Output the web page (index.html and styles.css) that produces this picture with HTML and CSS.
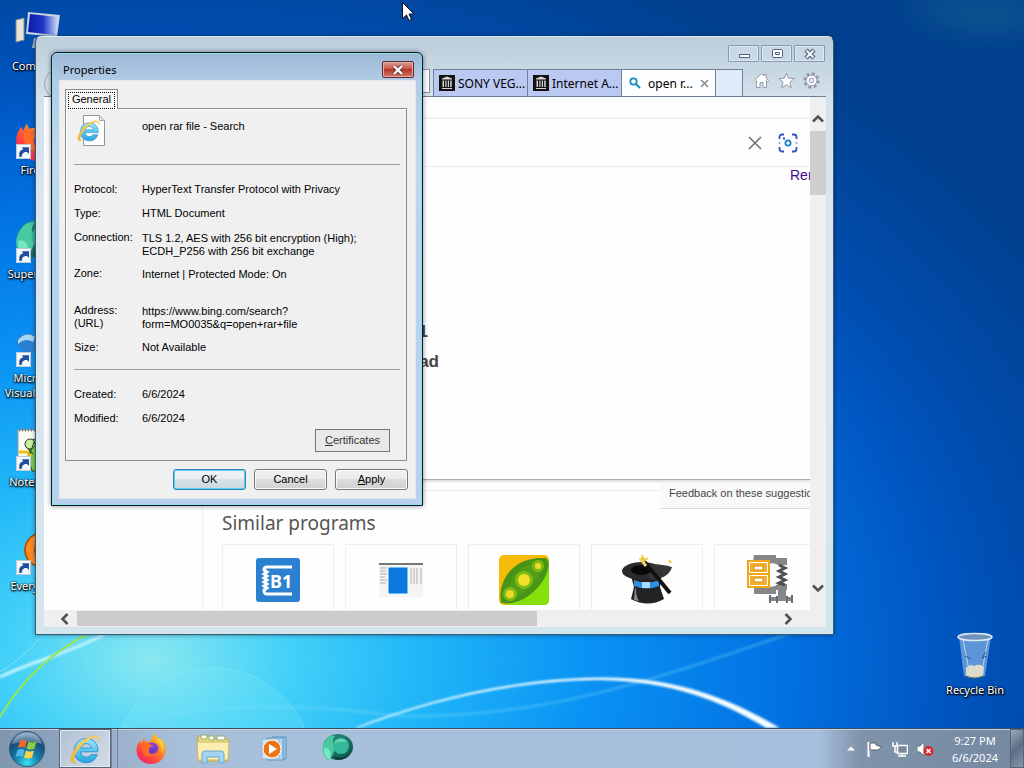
FILE: index.html
```html
<!DOCTYPE html>
<html lang="en">
<head>
<meta charset="utf-8">
<title>Desktop</title>
<link rel="stylesheet" href="styles.css">
</head>
<body>
<svg width="0" height="0" class="defs" aria-hidden="true">
  <defs>
    <linearGradient id="ieBlue" x1="0" y1="0" x2="0" y2="1"><stop offset="0" stop-color="#a2e8fc"/><stop offset=".5" stop-color="#58c8f2"/><stop offset="1" stop-color="#2ba3e0"/></linearGradient>
    <linearGradient id="ieGold" x1="1" y1="0" x2="0" y2="1"><stop offset="0" stop-color="#ffe27a"/><stop offset="1" stop-color="#f0b52e"/></linearGradient>
    <linearGradient id="fox" x1="1" y1="0" x2="0.2" y2="1"><stop offset="0" stop-color="#ffe23c"/><stop offset=".4" stop-color="#ff9320"/><stop offset=".75" stop-color="#ff4341"/><stop offset="1" stop-color="#f0206c"/></linearGradient>
    <linearGradient id="teal" x1="0" y1="0" x2="1" y2="1"><stop offset="0" stop-color="#2e9a84"/><stop offset=".5" stop-color="#1c7566"/><stop offset="1" stop-color="#0d4b45"/></linearGradient>
    <radialGradient id="orb" cx=".5" cy=".9" r=".9"><stop offset="0" stop-color="#38e0f4"/><stop offset=".4" stop-color="#167aa8"/><stop offset=".75" stop-color="#174b78"/><stop offset="1" stop-color="#8eacc4"/></radialGradient>
    <linearGradient id="screen" x1="0" y1="0" x2="1" y2="0"><stop offset="0" stop-color="#0a1ca8"/><stop offset=".5" stop-color="#1c38c8"/><stop offset="1" stop-color="#cfdcfa"/></linearGradient>
    <symbol id="ie" viewBox="0 0 32 32">
      <path d="M27.500 18.500H12.200c.2 3 2 4.700 4.800 4.700 2 0 3.400-.8 4.200-2.200h5.700c-1.400 4.600-5 7.200-9.900 7.200-6.300 0-10.600-4.200-10.600-10.600S10.800 6.800 17 6.800c6.700 0 10.800 4.500 10.500 11.700zM12.300 15.200h9.300c-.2-2.500-1.900-4-4.500-4s-4.400 1.500-4.800 4z" fill="url(#ieBlue)" stroke="#2387c8" stroke-width=".7"/>
      <path d="M28.500 9.500C29.300 5.500 26.500 3.200 21 5 12 8 4.500 17 3.500 24.500c-.4 3 1.300 4.500 4.500 3.500-1.800-.2-2.300-1.500-1.700-3.900C8 17.500 14.500 10 21.500 6.700c3.800-1.600 6-.7 7 2.800z" fill="url(#ieGold)" stroke="#e0aa35" stroke-width=".4"/>
    </symbol>
    <symbol id="firefox" viewBox="0 0 32 32">
      <path d="M16 31C7.500 31 1.500 25 1.500 17c0-4 1.500-7 3.800-9.500l.7 3 3-5.200 1.500 3.500c2-.8 4-.6 5.500 0C16 5 18 2 20.500.5c.5 3 1.500 4.500 3.500 6l.5-2C28.500 8 30.500 12 30.500 17 30.500 25 24.500 31 16 31z" fill="url(#fox)"/>
      <circle cx="17" cy="16" r="6.500" fill="#7a3fe0"/>
      <path d="M7 10c3-.8 6 0 8 1.500 2 .3 3 .6 3.500 1.600-3 .6-4.500 2-4.500 4 3 2.500 7 1.500 8.500-2 .8 5-2 9-7 9-6 0-10-5-8.500-14.100z" fill="#ff6a28"/>
      <path d="M15 14c2 3 5 3 7 1 1 3-2 6-5 6s-4-3-2-7z" fill="#6b38c8"/>
      <path d="M20 7c5 2 7.500 7 6 13 2-2 3.500-7 1.500-11.500L24 5z" fill="#ffd23c" opacity=".8"/>
    </symbol>
    <symbol id="supermium" viewBox="0 0 32 32">
      <ellipse cx="17" cy="14" rx="15" ry="13" fill="url(#teal)"/>
      <path d="M3 10C6 4 10 2 14 3c-3 3-3 7 1 10l-3 8-4 7C1 23 0 16 3 10z" fill="#48c9a0"/>
      <path d="M13 23c5 3 12 2 16-3-2 5-8 8-15 6z" fill="#0c3836"/>
      <circle cx="20" cy="13" r="8" fill="#36b899"/><path d="M13 10c2-5 10-6 13-1-4-.5-8-.5-13 1z" fill="#8ce8ca" opacity=".6"/>
      <path d="M3 15c5-1 8 4 6 12C5 25 2 21 3 15z" fill="#78e6c2"/>
    </symbol>
    <symbol id="shortcut" viewBox="0 0 15 15"><path d="M0 0h15v15H0z" fill="#f6f9fc"/><path d="M.5.5h14v14H.5z" fill="none" stroke="#b9c9d8"/><path d="M3.500 13C2.500 8.500 4 6 7.200 5.600L6 3.200h7V10l-2-2C8.500 7.600 5.500 9 5.800 13z" fill="#1f4f9e"/></symbol>
    <symbol id="archive" viewBox="0 0 16 16"><path d="M0 0h16v16H0z" fill="#111"/><path d="M8 1.500l5 2v1H3v-1zM3 13h10v1H3zM3.500 5.500h1.500v6.500H3.500zM6.300 5.500h1.200v6.500H6.300zM8.800 5.500H10v6.500H8.800zM11.200 5.500h1.500v6.500h-1.500z" fill="#d6d6d6"/></symbol>
  </defs>
</svg>

<div class="desktop">
  <main class="workspace">
    <svg class="wallpaper" viewBox="0 0 1024 728" preserveAspectRatio="none" aria-hidden="true">
      <defs><filter id="soft"><feGaussianBlur stdDeviation="1"/></filter><filter id="haze" x="-50%" y="-100%" width="200%" height="300%"><feGaussianBlur stdDeviation="16"/></filter></defs>
      <path d="M900 0H1030V25Q960 40 900 0z" fill="#3b8c94" opacity=".35" filter="url(#haze)"/>
      <circle cx="213" cy="768" r="100" fill="#7be6fa" opacity=".22"/>
      <circle cx="213" cy="768" r="100" fill="none" stroke="#a4effc" opacity=".3"/>
      <path d="M120 728C190 703 290 702 400 716 540 718 640 685 800 630" fill="none" stroke="#7fe0f8" stroke-width="3" opacity=".3" filter="url(#soft)"/>
      <path d="M355 728C430 698 520 678 600 677.500 670 677 725 695 780 728H766C720 700 670 681 600 680 520 680 430 700 358 728z" fill="#f4fdff" filter="url(#soft)"/>
      <path d="M0 677C35 660 65 655 105 634" fill="none" stroke="#c4f5fd" stroke-width="3" filter="url(#soft)"/>
      <path d="M0 672C20 660 35 645 45 632" fill="none" stroke="#80e4fa" stroke-width="1"/>
      <path d="M0 717C25 675 55 650 92 632" fill="none" stroke="#9ae456" stroke-width="2"/>
    </svg>

    <ul class="icons">
      <li><svg class="big" viewBox="0 0 48 48"><path d="M2 10l8-2v22l-8 2z" fill="#e8e4da" stroke="#8a8a86"/><path d="M14 2l32 3-3 22-31-3z" fill="#c8d4e4"/><path d="M16 4l28 3-3 18-27-3z" fill="url(#screen)"/><path d="M20 28l14 2 3 8H18z" fill="#a9b6c4"/></svg><span>Computer</span></li>
      <li><svg class="big" viewBox="0 0 48 48"><use href="#firefox" x="0" y="2" width="46" height="46"/></svg><svg class="link"><use href="#shortcut"/></svg><span>Firefox</span></li>
      <li><svg class="big" viewBox="0 0 48 48"><use href="#supermium" x="0" y="0" width="48" height="48"/></svg><svg class="link"><use href="#shortcut"/></svg><span>Supermium</span></li>
      <li><svg class="big" viewBox="0 0 48 48"><path d="M2 20Q8 8 20 13q14-4 22 8-8 16-22 9Q8 34 2 20z" fill="#2b7fd0"/><path d="M4 18q8-9 17-3l-2 5Q12 15 4 22z" fill="#a8d4f4"/></svg><svg class="link"><use href="#shortcut"/></svg><span>Microsoft<br>Visual Studio</span></li>
      <li><svg class="big" viewBox="0 0 48 48"><path d="M4 4h38v40H4z" fill="#fbfbf5" stroke="#9b9b9b"/><path d="M5 4h36" stroke="#777" stroke-width="3" stroke-dasharray="1 2"/><path d="M14 30l2-8-2-5 6-4 6 4 4-6v34H18z" fill="#7fce3f" stroke="#254c14"/><circle cx="16" cy="18" r="5" fill="#c9f0a0" stroke="#254c14"/><path d="M5 26h8l4 4" stroke="#e7c51c" stroke-width="3" fill="none"/><path d="M11 20l8 8M20 16l-4 12" stroke="#254c14"/></svg><svg class="link"><use href="#shortcut"/></svg><span>Notepad++</span></li>
      <li><svg class="big" viewBox="0 0 48 48"><circle cx="28" cy="20" r="17" fill="#ff8a1a" stroke="#a34700" stroke-width="1.500"/><circle cx="31" cy="20" r="10" fill="none" stroke="#a34700" stroke-width="2"/><path d="M16 31L9 42" stroke="#e56d08" stroke-width="6"/></svg><svg class="link"><use href="#shortcut"/></svg><span>Everything</span></li>
    </ul>

    <div class="recycle">
      <svg width="40" height="50" viewBox="0 0 40 50"><path d="M4 5l5 39q10 5 21 0l6-39z" fill="#8fb8e8" opacity=".65"/><path d="M11 36q4-5 8-2 6-3 10 1l-1 9q-8 4-17 0z" fill="#dedace"/><path d="M11 44q9 4 17 0" stroke="#555" fill="none"/><path d="M8 8l6 30M33 8l-5 26" stroke="#bcd6f2" fill="none"/><path d="M10 24l6 3M31 20l-4 6 5-2" stroke="#28507c" fill="none"/><ellipse cx="20" cy="5" rx="17" ry="3.500" fill="#6f93bc" stroke="#dce8f2" stroke-width="1.500"/></svg>
      <span>Recycle Bin</span>
    </div>

    <section class="browser" aria-label="Browser">
      <header class="caption">
        <button aria-label="Minimize"><svg width="18" height="12" viewBox="0 0 18 12"><path d="M4.500 6.500h10v3h-10z" fill="#fff" stroke="#53607b"/></svg></button>
        <button aria-label="Restore"><svg width="18" height="12" viewBox="0 0 18 12"><rect x="4.500" y="1.500" width="10" height="8" rx="1" fill="#fff" stroke="#53607b"/><path d="M7.500 4.500h4v2h-4z" fill="none" stroke="#53607b"/></svg></button>
        <button aria-label="Close"><svg width="18" height="12" viewBox="0 0 18 12"><path d="M5 2l8 8M13 2l-8 8" stroke="#53607b" stroke-width="4.500"/><path d="M5.500 2.500l7 7M12.500 2.500l-7 7" stroke="#fff" stroke-width="2"/></svg></button>
      </header>
      <nav class="tools">
        <span class="back"></span>
        <span class="address"></span>
        <div class="tabs">
          <button class="tab"><svg width="16" height="16"><use href="#archive"/></svg><span>SONY VEG...</span></button>
          <button class="tab"><svg width="16" height="16"><use href="#archive"/></svg><span>Internet A...</span></button>
          <button class="tab current"><svg width="12" height="12" viewBox="0 0 12 12"><circle cx="4.500" cy="4.500" r="3.200" fill="none" stroke="#1789b5" stroke-width="1.700"/><path d="M7 7l4 4" stroke="#1789b5" stroke-width="2"/></svg><span>open r...</span><svg width="9" height="9" viewBox="0 0 9 9"><path d="M1 1l7 7M8 1L1 8" stroke="#8c8c8c" stroke-width="1.600"/></svg></button>
          <button class="tab blank" aria-label="New tab"></button>
        </div>
        <div class="actions">
          <button aria-label="Home"><svg width="17" height="17" viewBox="0 0 17 17"><path d="M1.500 8.500l7-7 2.500 2.500V2.500h2V6l2.500 2.500-1 1-1-1v7H10v-5H7v5H3.500v-7l-1 1z" fill="#fff" stroke="#929baa"/></svg></button>
          <button aria-label="Favorites"><svg width="17" height="17" viewBox="0 0 17 17"><path d="M8.500 1l2.100 5.200 5.600.4-4.300 3.600 1.400 5.500-4.800-3-4.800 3 1.400-5.500L.8 6.600l5.600-.4z" fill="#fff" stroke="#929baa"/></svg></button>
          <button aria-label="Tools"><svg width="17" height="17" viewBox="0 0 17 17"><circle cx="8.500" cy="8.500" r="6.700" fill="none" stroke="#929baa" stroke-width="3" stroke-dasharray="3 2.260"/><circle cx="8.500" cy="8.500" r="5.300" fill="#fff" stroke="#929baa"/><circle cx="8.500" cy="8.500" r="2.300" fill="#dfe9f2" stroke="#929baa"/></svg></button>
        </div>
      </nav>
      <div class="view">
        <div class="page">
          <div class="rail"></div>
          <div class="main">
            <div class="suggest">
              <form class="search">
                <input type="text" aria-label="Search">
                <button type="button" aria-label="Clear"><svg width="14" height="14" viewBox="0 0 14 14"><path d="M1 1l12 12M13 1L1 13" stroke="#777" stroke-width="1.700"/></svg></button>
                <button type="button" aria-label="Search by image"><svg width="20" height="20" viewBox="0 0 20 20" fill="none" stroke="#2d52c8" stroke-width="1.800"><path d="M1.500 6V4a2.500 2.500 0 012.500-2.500h2M14 1.500h2A2.500 2.500 0 0118.500 4v2M18.500 14v2a2.500 2.500 0 01-2.500 2.500h-2M6 18.500H4A2.500 2.500 0 011.500 16v-2M1.500 9.500v1M18.500 9.500v1"/><circle cx="10" cy="10" r="2.600" stroke="#1782c9"/><path d="M5 5.500h2"/></svg></button>
              </form>
              <a class="remove" href="#">Rem</a>
              <p class="hit">1</p>
              <p class="hit wide">ad</p>
            </div>
            <div class="below"><span class="rule"></span><a class="feedback" href="#">Feedback on these suggestic</a></div>
            <h2>Similar programs</h2>
            <div class="cards">
              <a href="#" aria-label="B1"><svg width="44" height="44" viewBox="0 0 44 44"><rect width="44" height="44" rx="3" fill="#2b80cf"/><path d="M36 9H11q-3 0-3 3l3 2-3 2 3 2-3 2 3 2-3 2 3 2-3 2 3 2-3 2q0 4 3 4h25" fill="none" stroke="#fff" stroke-width="3"/><text x="14" y="30" class="b1">B1</text></svg></a>
              <a href="#" aria-label="Program window"><svg width="44" height="34" viewBox="0 0 44 34"><path d="M0 0h44v34H0z" fill="#f4f4f4"/><path d="M0 1h44" stroke="#777" stroke-width="2"/><path d="M1 5h7M1 8h6M1 11h7M1 14h5M1 17h7M1 20h6M32 5v16M35 5v16M38 5v16M42 5v16" stroke="#d2d2d2" stroke-width="2"/><path d="M9 4h20v27H9z" fill="#0b78dc" stroke="#e2ffff"/></svg></a>
              <a href="#" aria-label="PeaZip"><svg width="50" height="50" viewBox="0 0 50 50"><rect width="50" height="50" rx="5" fill="#f7bc09"/><path d="M50 4v41q0 5-5 5H5Q40 44 50 4z" fill="#84e008"/><path d="M2 48C-2 26 14 1 46 3c5 0 6 14-6 28C28 45 15 50 2 48z" fill="#489417"/><path d="M7 44C8 25 20 8 43 7 45 25 20 45 7 44z" fill="#559c17"/><circle cx="25" cy="25" r="9" fill="#7fbd13"/><circle cx="39" cy="11" r="6" fill="#7fbd13"/><circle cx="11" cy="39" r="7" fill="#7fbd13"/><circle cx="25" cy="25" r="6" fill="#f4df28"/><circle cx="39" cy="11" r="3" fill="#f0d82a"/><circle cx="11" cy="39" r="4" fill="#f0d82a"/></svg></a>
              <a href="#" aria-label="Magic hat"><svg width="50" height="50" viewBox="0 0 50 50"><path d="M9 21l30 1-1 10 4 12q-16 9-33 0l3-12z" fill="#232326"/><path d="M14 34q0 8 3 12l-5-1 1-12z" fill="#8c8c90"/><ellipse cx="20" cy="16" rx="20" ry="9" fill="#2a2a2c"/><path d="M15 9q20-1 35 3-3 11-20 13z" fill="#353537"/><ellipse cx="19" cy="15" rx="10" ry="5" fill="#080808"/><path d="M12 25q13 5 25 0v6q-12 5-25 0z" fill="#2e8fe0"/><path d="M20 27h8v6h-8z" fill="#a6dcff"/><path d="M20 4l28 34" stroke="#111" stroke-width="4"/><path d="M18 3l6 8" stroke="#ead36b" stroke-width="3"/><path d="M20 0l2 5M26 3l-4 3M47 5l2 3" stroke="#f6cc30" stroke-width="2"/></svg></a>
              <a href="#" aria-label="WinZip"><svg width="48" height="50" viewBox="0 0 48 50"><path d="M8 0h22v3h11v7h-9q-4-3-10-1v22q6 2 10-2h9v6H30v4H8v-6l3-3V8L7 6z" fill="#858789"/><path d="M33 10l6 3-6 3 6 3-6 3 6 3-6 3 6 2" fill="none" stroke="#4e5052" stroke-width="3"/><path d="M32 35h8v7h-8zM25 42h21v4H25z" fill="#85888a"/><path d="M24 40v8M46 40v8M31 41v7M41 41v7" stroke="#6b6e70" stroke-width="2"/><rect x="1" y="5" width="23" height="28" fill="#f0a51c"/><path d="M3.500 7.500h18v10h-18zM3.500 20.500h18v10h-18z" fill="#f4ae2d" stroke="#fff"/><path d="M8 11h9v4H8zM8 23h9v4H8z" fill="#fff" stroke="#d9890b"/></svg></a>
            </div>
          </div>
        </div>
        <div class="vscroll">
          <button aria-label="Scroll up"><svg width="12" height="9" viewBox="0 0 12 9"><path d="M1 7.500l5-5 5 5" fill="none" stroke="#505050" stroke-width="2.500"/></svg></button>
          <span class="thumb"></span>
          <button aria-label="Scroll down"><svg width="12" height="9" viewBox="0 0 12 9"><path d="M1 1.500l5 5 5-5" fill="none" stroke="#505050" stroke-width="2.500"/></svg></button>
        </div>
        <div class="hscroll">
          <button aria-label="Scroll left"><svg width="9" height="12" viewBox="0 0 9 12"><path d="M7.500 1l-5 5 5 5" fill="none" stroke="#505050" stroke-width="2.500"/></svg></button>
          <span class="thumb"></span>
          <button aria-label="Scroll right"><svg width="9" height="12" viewBox="0 0 9 12"><path d="M1.500 1l5 5-5 5" fill="none" stroke="#505050" stroke-width="2.500"/></svg></button>
        </div>
      </div>
    </section>

    <section class="dialog" role="dialog" aria-labelledby="dlg">
      <header class="dlg-title">
        <span id="dlg">Properties</span>
        <button class="dlg-close" aria-label="Close"><svg width="14" height="10" viewBox="0 0 14 10"><path d="M3 1l8 8M11 1L3 9" stroke="#5e3a40" stroke-width="4"/><path d="M3 1l8 8M11 1L3 9" stroke="#fff" stroke-width="2.400"/></svg></button>
      </header>
      <div class="dlg-body">
        <button class="dlg-tab" role="tab" aria-selected="true"><span>General</span></button>
        <div class="sheet">
          <div class="subject">
            <svg width="32" height="32" viewBox="0 0 32 32"><path d="M6.500.5h16l5 5v25h-21z" fill="#fdfdfd" stroke="#8f969c"/><path d="M22.500.5v5h5" fill="#e6e6e6" stroke="#a9a9a9"/><use href="#ie" x="-2" y="2" width="27" height="27"/></svg>
            <span>open rar file - Search</span>
          </div>
          <dl class="facts">
            <dt>Protocol:</dt><dd>HyperText Transfer Protocol with Privacy</dd>
            <dt>Type:</dt><dd>HTML Document</dd>
            <dt>Connection:</dt><dd class="drop">TLS 1.2, AES with 256 bit encryption (High);<br>ECDH_P256 with 256 bit exchange</dd>
            <dt>Zone:</dt><dd class="drop gap">Internet | Protected Mode: On</dd>
            <dt>Address:<br>(URL)</dt><dd class="drop">https://www.bing.com/search?<br>form=MO0035&amp;q=open+rar+file</dd>
            <dt>Size:</dt><dd>Not Available</dd>
          </dl>
          <dl class="facts dates">
            <dt>Created:</dt><dd>6/6/2024</dd>
            <dt>Modified:</dt><dd>6/6/2024</dd>
          </dl>
          <button class="cert"><u>C</u>ertificates</button>
        </div>
        <div class="dlg-actions">
          <button class="btn primary">OK</button>
          <button class="btn">Cancel</button>
          <button class="btn"><u>A</u>pply</button>
        </div>
      </div>
    </section>

    <svg class="cursor" width="12" height="19" viewBox="0 0 12 19"><path d="M.5.5v16l4-3.500 2.500 5.500 2.500-1-2.500-5.500H12z" fill="#fff" stroke="#111"/></svg>
  </main>

  <footer class="taskbar">
    <button class="start" aria-label="Start"><svg width="38" height="38" viewBox="0 0 38 38"><circle cx="19" cy="19" r="17.500" fill="url(#orb)" stroke="#31587a"/><path d="M4 14Q8 3 19 3t15 11Q19 9 4 14z" fill="#fff" opacity=".3"/><path d="M12 11q4-2 7 0l-2 7q-3-2-7 0z" fill="#f3652b"/><path d="M20.500 11.500q4 2 8 0l-2 7q-4 2-8 0z" fill="#8fcb3f"/><path d="M9.500 20q4-2 7 0l-2 7q-3-2-7 0z" fill="#4fb4ee"/><path d="M18 20.500q4 2 8 0l-2 7q-4 2-8 0z" fill="#fdd249"/></svg></button>
    <button class="task active" aria-label="Internet Explorer"><svg width="36" height="36"><use href="#ie"/></svg></button>
    <span class="stack"></span>
    <div class="pins">
      <button class="task" aria-label="Firefox"><svg width="32" height="32"><use href="#firefox"/></svg></button>
      <button class="task" aria-label="Explorer"><svg width="34" height="30" viewBox="0 0 34 30"><path d="M2 2h12l2 3h16v22H2z" fill="#f4dd83" stroke="#c6a748"/><path d="M5 1h6v4H5zM13 2h5v4h-5zM21 2h8v4h-8z" fill="#fff" stroke="#8fa86c"/><path d="M1 8h32l-1 18H2z" fill="#fbeeb0" stroke="#d2b65c"/><path d="M6 29v-9q0-3 3-3h16q3 0 3 3v9h-5v-6H11v6z" fill="#a4d4f2" stroke="#6aa8d4"/></svg></button>
      <button class="task" aria-label="Media Player"><svg width="28" height="26" viewBox="0 0 28 26"><path d="M11 1h14v22H11z" fill="#9cc6e6" stroke="#5c92bf"/><path d="M6 2h16v22H6z" fill="#b9daf0" stroke="#5c96c2"/><path d="M1 3h17v20H1z" fill="#cfe4f4" stroke="#8cb4d4"/><circle cx="11" cy="13" r="9" fill="#ef7417" stroke="#fff"/><path d="M8 8l8 5-8 5z" fill="#fff"/></svg></button>
      <button class="task" aria-label="Supermium"><svg width="32" height="32"><use href="#supermium"/></svg></button>
    </div>
    <div class="tray">
      <button aria-label="Show hidden icons"><svg width="8" height="5" viewBox="0 0 8 5"><path d="M0 4.500L4 .5l4 4z" fill="#fff"/></svg></button>
      <button aria-label="Action Center"><svg width="16" height="16" viewBox="0 0 16 16"><path d="M1.500 1v15" stroke="#fff" stroke-width="2"/><path d="M3 2h6v2l6 2-4 3H3z" fill="#fff" stroke="#566"/></svg></button>
      <button aria-label="Network"><svg width="16" height="16" viewBox="0 0 16 16"><path d="M5.500 4.500h10v8h-10z" fill="#7b8b9c" stroke="#fff" stroke-width="1.500"/><path d="M6 15h8M10 12v3M1 1v4h4V1M3 5v6h2" fill="none" stroke="#fff" stroke-width="1.500"/></svg></button>
      <button aria-label="Volume muted"><svg width="17" height="16" viewBox="0 0 17 16"><path d="M0 5h3l4-4v14l-4-4H0z" fill="#fff" stroke="#677"/><circle cx="11.500" cy="10" r="5" fill="#d8292f"/><path d="M9.500 8l4 4M13.500 8l-4 4" stroke="#fff" stroke-width="1.500"/></svg></button>
      <time class="clock">9:27 PM<br>6/6/2024</time>
      <button class="peek" aria-label="Show desktop"></button>
    </div>
  </footer>
</div>
</body>
</html>
```
FILE: styles.css
```css
* { box-sizing: border-box; }
body { margin: 0; font-family: "Noto Sans", "Open Sans", sans-serif; font-size: 12px; color: #000; }
button { font: inherit; color: inherit; margin: 0; padding: 0; border: 0; background: none; }
a { color: inherit; text-decoration: none; }
svg { display: block; flex: none; }
.defs { position: absolute; }

.desktop { display: flex; flex-direction: column; height: 100vh; overflow: hidden; }
.workspace {
  position: relative; flex: 1; min-height: 0; overflow: hidden;
  background: radial-gradient(940px 680px at 150px 660px, #8ae8f0 0, #46d2f8 14%, #22b8f8 28%, #0a94f4 46%, #0274e4 66%, #0058c4 83%, #004cac 94%, #00408e 112%);
}
.wallpaper { position: absolute; inset: 0; width: 100%; height: 100%; }

.icons { position: absolute; top: 10px; left: 0; width: 76px; margin: 0; padding: 0; list-style: none; }
.icons li { position: relative; display: flex; flex-direction: column; align-items: center; height: 104px; }
.big { width: 48px; height: 48px; }
.link { position: absolute; left: 16px; top: 30px; width: 15px; height: 15px; }
.icons span, .recycle span {
  font-size: 11px; line-height: 15px; color: #fff; text-align: center; white-space: nowrap;
  text-shadow: 1px 1px 2px #000, 0 0 2px #000, 0 1px 2px #000;
}
.recycle { position: absolute; right: 11px; top: 632px; width: 76px; display: flex; flex-direction: column; align-items: center; }
.cursor { position: absolute; left: 402px; top: 2px; }

/* Browser window */
.browser {
  position: absolute; left: 35px; top: 36px; width: 799px; height: 599px;
  display: flex; flex-direction: column; padding: 0 7px 7px 8px;
  border: 1px solid #3d5a70; border-top-color: #dce8f0; border-radius: 6px 6px 0 0;
  background: linear-gradient(#bccddb, #d2e1ea 60px, #dce6f0 200px, #d2e6ec);
  box-shadow: 0 0 4px rgba(0, 20, 60, .5);
}
.caption { display: flex; justify-content: flex-end; gap: 2px; height: 32px; padding: 8px 1px 0 0; }
.caption button { display: grid; place-items: center; width: 31px; height: 17px; border: 1px solid #8799aa; border-radius: 1px; background: #c8d8e4; box-shadow: inset 0 0 0 1px #dce8f0; }
.tools { position: relative; display: flex; height: 28px; border-bottom: 1px solid #6d7f90; }
.back { width: 30px; height: 30px; border: 1px solid #93a4b4; border-radius: 50%; }
.address { flex: 1; height: 24px; margin: 0 3px 0 8px; border: 1px solid #95899f; background: #fafaff; }
.tabs { display: flex; }
.tab { display: flex; align-items: center; gap: 3px; width: 94px; padding: 0 5px; border: 1px solid #71819a; border-width: 1px 0 0 1px; background: #bac8f2; white-space: nowrap; }
.tab.current { gap: 7px; background: #fcfeff; padding-left: 7px; }
.tab.blank { width: 28px; border-right-width: 1px; background: #dfebf9; }
.actions { display: flex; gap: 8px; width: 83px; padding: 3px 0 0 10px; align-items: flex-start; }

.view { flex: 1; min-height: 0; display: grid; grid-template: 1fr 17px / 1fr 16px; background: #efeff2; }
.page { display: grid; grid-template-columns: 159px 1fr; min-height: 0; min-width: 0; overflow: hidden; background: #fefefe; }
.rail { border-right: 1px solid #f1f1f1; }
.main { min-width: 0; padding-top: 21px; }
.suggest { height: 362px; margin-left: 19px; border: 1px solid #ececec; border-bottom-color: #aaa; border-right: 0; box-shadow: 0 1px 3px #ccc; font-family: "Liberation Sans", sans-serif; }
.search { display: flex; align-items: center; height: 48px; padding-right: 12px; gap: 16px; border-bottom: 1px solid #ececec; }
.search input { flex: 1; min-width: 0; border: 0; outline: 0; background: none; font: inherit; }
.remove { display: block; width: 20px; margin-left: auto; overflow: hidden; font-size: 14px; line-height: 16px; color: #420a91; }
.hit { width: 205px; margin: 0; text-align: right; font-size: 17px; font-weight: bold; line-height: 30px; color: #444; }
.remove + .hit { margin-top: 134px; }
.hit.wide { width: 216px; }
.below { display: flex; align-items: flex-start; height: 30px; padding-top: 3px; }
.rule { flex: 1; margin-top: 7px; border-top: 1px solid #ececec; }
.feedback { width: 150px; height: 26px; padding-left: 9px; overflow: hidden; background: #f9f9f9; border-bottom: 1px solid #ddd; font: 11px/20px "Liberation Sans", sans-serif; white-space: nowrap; color: #444; }
h2 { margin: 0 0 0 19px; font-size: 19px; font-weight: normal; line-height: 26px; color: #555; }
.cards { display: grid; grid-template-columns: repeat(5, 112px); gap: 11px; margin: 8px 0 0 19px; }
.cards a { display: grid; place-items: center; height: 72px; border: 1px solid #eee; }
.b1 { font: bold 18px "Noto Sans", sans-serif; fill: #fff; }

.vscroll, .hscroll { display: flex; align-items: center; }
.vscroll { flex-direction: column; padding: 17px 0 17px; }
.vscroll .thumb { width: 16px; height: 64px; margin-top: 8px; background: #cfcfd1; }
.vscroll button:last-child { margin-top: auto; }
.hscroll { padding: 0 17px 0 16px; }
.hscroll .thumb { width: 460px; height: 15px; margin-left: 8px; background: #cdcbce; }
.hscroll button:last-child { margin-left: auto; }

/* Properties dialog */
.dialog {
  position: absolute; left: 51px; top: 52px; width: 372px; height: 454px;
  display: flex; flex-direction: column; padding: 0 7px 7px 8px;
  border: 1px solid #0b1a24; border-radius: 6px 6px 0 0;
  background: linear-gradient(#9db9d8, #b2cbe6 28px, #c3d9ed 110px, #b6d2ee 200px);
  box-shadow: inset 0 0 0 1px #8fdfe8, 0 0 5px rgba(0, 20, 50, .5);
}
.dlg-title { display: flex; justify-content: space-between; height: 28px; padding: 8px 1px 0 3px; line-height: 18px; font-size: 11px; }
.dlg-close { display: grid; place-items: center; width: 32px; height: 17px; border: 1px solid #5b2a35; border-radius: 2px; background: linear-gradient(#dca097, #c95646 45%, #b5382a 50%, #d27562); box-shadow: inset 0 0 0 1px #e2aba5; }
.dlg-body { flex: 1; padding: 8px 8px 0 5px; background: #f0f0f0; font: 11px/13px "Liberation Sans", Arial, sans-serif; box-shadow: 0 0 0 1px #dce8f2; }
.dlg-tab { position: relative; display: block; width: 53px; height: 20px; margin-bottom: -1px; padding: 2px; border: 1px solid #898c95; border-bottom: 0; background: #f8f8f8; }
.dlg-tab span { display: block; border: 1px dotted #000; line-height: 13px; padding-bottom: 2px; }
.sheet { height: 353px; padding: 6px 6px 0 8px; border: 1px solid #898c95; background: #f0f0f0; box-shadow: inset 1px 1px #fff; }
.subject { display: flex; height: 50px; gap: 33px; padding-left: 3px; border-bottom: 1px solid #a0a0a0; }
.subject span { padding-top: 5px; }
.facts { display: grid; grid-template-columns: 68px 1fr; row-gap: 11px; margin: 0; padding: 18px 0 15px; border-bottom: 1px solid #a0a0a0; align-items: start; }
.facts dt, .facts dd { margin: 0; white-space: nowrap; }
.facts dd:nth-of-type(2) { margin-bottom: -1px; }
.facts .drop { padding-top: 1px; margin-bottom: -2px; }
.facts .gap { margin-bottom: 12px; }
.facts.dates { padding: 18px 0 4px; border: 0; }
.cert { display: block; width: 75px; height: 23px; margin: 0 10px 0 auto; border: 1px solid #777; background: #e9e9e9; color: #333; }
.dlg-actions { display: flex; justify-content: flex-end; gap: 8px; margin: 8px -1px 0 0; }
.btn { width: 73px; height: 21px; border: 1px solid #777; border-radius: 3px; background: linear-gradient(#f2f2f2, #ebebeb 48%, #dddddd 50%, #d0d0d0); box-shadow: inset 0 0 0 1px #fafafa; }
.btn.primary { border-color: #2c83b4; box-shadow: inset 0 0 0 1px #5fd0f4; background: linear-gradient(#f2f4f5, #e6eef2 48%, #d6e2e9 50%, #cbd8e0); }

/* Taskbar */
.taskbar { display: flex; align-items: center; height: 40px; border-top: 1px solid #3c4d60; background: linear-gradient(90deg, #8096ad, #a8bfda 180px, #a6bfdc 80%, #7f93ab 84%, #7488a0); box-shadow: inset 0 1px #c4d4e6; }
.start { width: 59px; padding-left: 8px; }
.task { display: grid; place-items: center; }
.active { width: 52px; height: 39px; border: 1px solid #51657c; background: linear-gradient(135deg, #b0c0d2, #d5dee8); box-shadow: inset 0 0 0 1px #e3ebf2; }
.stack { width: 7px; height: 39px; border: 1px solid #71869c; border-width: 0 1px; }
.pins { display: flex; flex: 1; padding-left: 2px; }
.pins .task { width: 62px; height: 38px; }
.tray { display: flex; align-items: center; gap: 9px; height: 100%; color: #fff; }
.clock { width: 64px; text-align: center; font-size: 11px; line-height: 17px; }
.tray > button:first-child { margin-right: 3px; }
.peek { width: 14px; height: 100%; margin-left: -6px; border: 1px solid #52657b; background: linear-gradient(135deg, #9aabbc, #5b6e84 50%, #8698aa); }
```
